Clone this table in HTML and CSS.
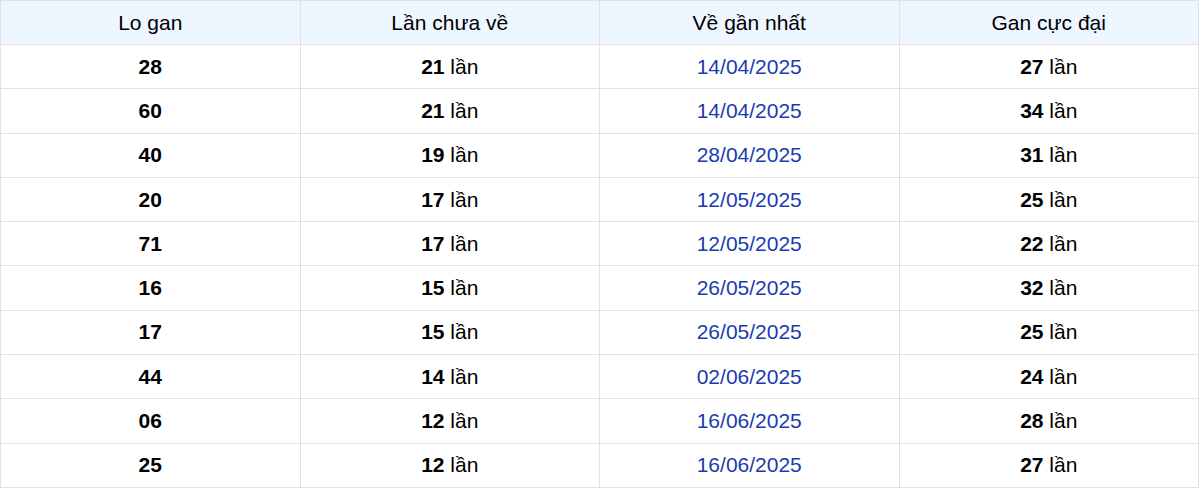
FILE: index.html
```html
<!DOCTYPE html>
<html lang="vi">
<head>
<meta charset="utf-8">
<link rel="stylesheet" href="styles.css">
</head>
<body>
<table class="gan-table">
  <thead>
    <tr><th>Lo gan</th><th>Lần chưa về</th><th>Về gần nhất</th><th>Gan cực đại</th></tr>
  </thead>
  <tbody>
    <tr><td><b>28</b></td><td><b>21</b> lần</td><td class="date">14/04/2025</td><td><b>27</b> lần</td></tr>
    <tr><td><b>60</b></td><td><b>21</b> lần</td><td class="date">14/04/2025</td><td><b>34</b> lần</td></tr>
    <tr><td><b>40</b></td><td><b>19</b> lần</td><td class="date">28/04/2025</td><td><b>31</b> lần</td></tr>
    <tr><td><b>20</b></td><td><b>17</b> lần</td><td class="date">12/05/2025</td><td><b>25</b> lần</td></tr>
    <tr><td><b>71</b></td><td><b>17</b> lần</td><td class="date">12/05/2025</td><td><b>22</b> lần</td></tr>
    <tr><td><b>16</b></td><td><b>15</b> lần</td><td class="date">26/05/2025</td><td><b>32</b> lần</td></tr>
    <tr><td><b>17</b></td><td><b>15</b> lần</td><td class="date">26/05/2025</td><td><b>25</b> lần</td></tr>
    <tr><td><b>44</b></td><td><b>14</b> lần</td><td class="date">02/06/2025</td><td><b>24</b> lần</td></tr>
    <tr><td><b>06</b></td><td><b>12</b> lần</td><td class="date">16/06/2025</td><td><b>28</b> lần</td></tr>
    <tr><td><b>25</b></td><td><b>12</b> lần</td><td class="date">16/06/2025</td><td><b>27</b> lần</td></tr>
  </tbody>
</table>
</body>
</html>
```
FILE: styles.css
```css
html, body {
  margin: 0;
  padding: 0;
  background: #fff;
}
.gan-table {
  width: 1199px;
  border-collapse: collapse;
  table-layout: fixed;
  font-family: "Liberation Sans", Arial, sans-serif;
  font-size: 21px;
  color: #000;
}
.gan-table th,
.gan-table td {
  border: 1px solid #e2e2e2;
  text-align: center;
  padding: 0;
}
.gan-table th {
  background: #eef6ff;
  font-weight: normal;
  height: 43px;
}
.gan-table td {
  height: 43.3px;
}
.gan-table b {
  font-weight: bold;
}
.gan-table .date {
  color: #1a3cb0;
}
```
